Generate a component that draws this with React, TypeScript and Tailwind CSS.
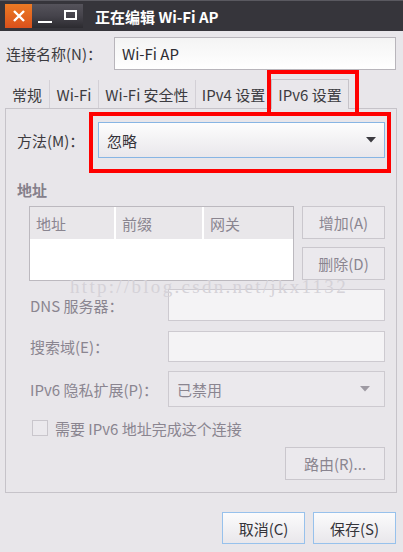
import React from 'react';

function Arrow({ color }: { color: string }) {
  return (
    <svg width="10" height="6" viewBox="0 0 10 6">
      <polygon points="0,0 10,0 5,5.5" fill={color} />
    </svg>
  );
}

function DisabledButton({ label, className }: { label: string; className: string }) {
  return (
    <div
      className={`flex items-center justify-center border border-[#cac7cd] bg-[#ebe9ed] text-[#8a8590] ${className}`}
    >
      {label}
    </div>
  );
}

export default function App() {
  const tabs = [
    { label: '常规', w: 'w-[45px]' },
    { label: 'Wi-Fi', w: 'w-[49px]' },
    { label: 'Wi-Fi 安全性', w: 'w-[97px]' },
    { label: 'IPv4 设置', w: 'w-[76px]' },
  ];

  return (
    <div className="relative w-[403px] h-[552px] overflow-hidden bg-[#e8e6ea] text-[15px] text-[#3c3b40] font-['Noto_Sans_CJK_SC',sans-serif] leading-none">
      {/* title bar */}
      <div className="h-[31px] flex items-center bg-[#36353b] border-t border-[#5a5960]">
        <div className="ml-[5px] flex h-[24px]">
          <div className="w-[27px] h-full flex items-center justify-center bg-gradient-to-b from-[#ec7a24] to-[#d9501c]">
            <svg width="12" height="12" viewBox="0 0 12 12">
              <path d="M1 1 L11 11 M11 1 L1 11" stroke="#fff" strokeWidth="2.4" />
            </svg>
          </div>
          <div className="w-[51px] h-full flex items-center bg-gradient-to-b from-[#55535b] via-[#45434b] to-[#2c2b30]">
            <div className="ml-[6px] mt-[12px] w-[14px] h-[2.5px] bg-white" />
            <div className="ml-[12px] w-[13px] h-[10px] border-2 border-white -mt-[2px]" />
          </div>
        </div>
        <span className="ml-[12px] text-white font-bold text-[15px]">正在编辑 Wi-Fi AP</span>
      </div>

      {/* connection name */}
      <div className="flex items-center mt-[6px] h-[33px]">
        <span className="pl-[6px] w-[114px]">连接名称(N)：</span>
        <div className="flex-1 mr-[7px] h-full flex items-center pl-[7px] border border-[#b8b5bb] bg-gradient-to-b from-[#f4f4f4] to-[#ffffff] text-[#2e2d32]">
          Wi-Fi AP
        </div>
      </div>

      {/* tabs */}
      <div className="flex mt-[8px] ml-[5px] h-[30px] items-end">
        {tabs.map((t) => (
          <div
            key={t.label}
            className={`${t.w} h-[28px] flex items-center justify-center border-r border-[#d3d0d6] text-[#3c3b40]`}
          >
            {t.label}
          </div>
        ))}
        <div className="w-[78px] h-[30px] -ml-px flex items-center justify-center border border-b-0 border-[#c6c3c9] bg-[#e9e7eb] relative top-px">
          IPv6 设置
        </div>
      </div>

      {/* panel */}
      <div className="mx-[5px] w-[392px] h-[385px] border border-[#c6c3c9] flex flex-col">
        <div className="flex items-center mt-[13px] h-[36px]">
          <span className="pl-[11px] w-[92px]">方法(M)：</span>
          <div className="flex-1 mr-[11px] h-full flex items-center justify-between px-[8px] border border-[#87b5e4] bg-gradient-to-b from-[#fdfdfd] to-[#e9e7eb] text-[#35343a]">
            <span>忽略</span>
            <Arrow color="#3c3b40" />
          </div>
        </div>

        <div className="mt-[24px] pl-[11px] h-[16px] font-bold text-[#85808b]">地址</div>

        <div className="flex mt-[8px] h-[75px] text-[#8a8590]">
          <div className="ml-[23px] w-[265px] h-full border border-[#bcb9bf] bg-white flex flex-col">
            <div className="flex h-[32px] bg-[#e9e7ea]">
              <div className="w-[86px] h-full flex items-center pl-[6px] border-r-2 border-white">地址</div>
              <div className="w-[88px] h-full flex items-center pl-[6px] border-r-2 border-white">前缀</div>
              <div className="flex-1 h-full flex items-center pl-[6px]">网关</div>
            </div>
          </div>
          <div className="ml-[8px] flex flex-col gap-[8px]">
            <DisabledButton label="增加(A)" className="w-[83px] h-[33px]" />
            <DisabledButton label="删除(D)" className="w-[83px] h-[33px]" />
          </div>
        </div>

        <div className="flex items-center mt-[8px] h-[32px] text-[#8a8590]">
          <span className="pl-[24px] w-[162px]">DNS 服务器：</span>
          <div className="w-[217px] h-full border border-[#cdcad0] bg-[#f4f3f5]" />
        </div>
        <div className="flex items-center mt-[10px] h-[31px] text-[#8a8590]">
          <span className="pl-[24px] w-[162px]">搜索域(E)：</span>
          <div className="w-[217px] h-full border border-[#cdcad0] bg-[#f4f3f5]" />
        </div>
        <div className="flex items-center mt-[9px] h-[36px] text-[#8a8590]">
          <span className="pl-[24px] w-[162px]">IPv6 隐私扩展(P)：</span>
          <div className="w-[217px] h-full flex items-center justify-between px-[8px] pr-[14px] border border-[#cdcad0] bg-[#ebe9ed]">
            <span>已禁用</span>
            <Arrow color="#9e9aa3" />
          </div>
        </div>

        <div className="flex items-center mt-[13px] h-[16px] text-[#8a8590]">
          <div className="ml-[26px] w-[16px] h-[16px] border border-[#c9c6cc] bg-[#ebe9ed]" />
          <span className="ml-[7px]">需要 IPv6 地址完成这个连接</span>
        </div>

        <div className="flex justify-end mt-[11px] mr-[11px]">
          <DisabledButton label="路由(R)..." className="w-[100px] h-[33px]" />
        </div>
      </div>

      {/* dialog buttons */}
      <div className="flex justify-end gap-[8px] mt-[19px] mr-[7px]">
        {['取消(C)', '保存(S)'].map((b) => (
          <div
            key={b}
            className="w-[83px] h-[32px] flex items-center justify-center border border-[#97c1ec] bg-gradient-to-b from-[#fbfbfc] to-[#e9e7eb] text-[#35343a]"
          >
            {b}
          </div>
        ))}
      </div>

      {/* watermark */}
      <div className="absolute left-[70px] top-[277px] text-[19px] tracking-[2.3px] text-[#d5d2d8] font-['Liberation_Serif',serif] pointer-events-none">
        http://blog.csdn.net/jkx1132
      </div>

      {/* red annotations */}
      <div className="absolute left-[267px] top-[70px] w-[92px] h-[46px] border-4 border-[#ff0000]" />
      <div className="absolute left-[89px] top-[112px] w-[302px] h-[61px] border-4 border-[#ff0000]" />
    </div>
  );
}
